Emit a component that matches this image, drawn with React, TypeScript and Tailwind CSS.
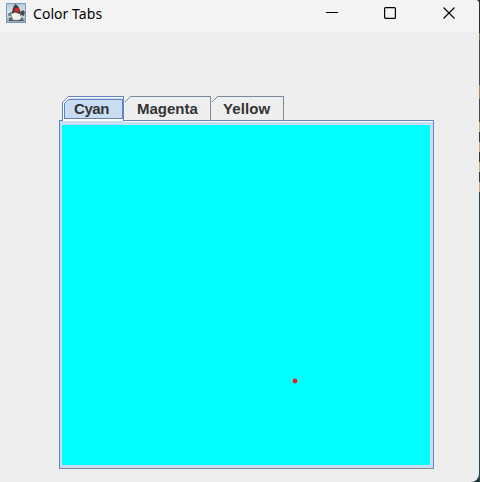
import { useState } from "react";

const tabs = [
  { name: "Cyan", width: "w-[62px]", pad: "pl-3 tracking-[-0.4px]" },
  { name: "Magenta", width: "w-[87px]", pad: "pl-[13px]" },
  { name: "Yellow", width: "w-[73px]", pad: "pl-3 tracking-[0.1px]" },
];

function JavaIcon() {
  return (
    <svg width="20" height="20" viewBox="0 0 20 20">
      <defs>
        <linearGradient id="sky" x1="0" y1="0" x2="0" y2="1">
          <stop offset="0" stopColor="#b4c6d6" />
          <stop offset="0.5" stopColor="#e2e8ec" />
          <stop offset="1" stopColor="#8fa3b5" />
        </linearGradient>
        <filter id="soft">
          <feGaussianBlur stdDeviation="0.55" />
        </filter>
      </defs>
      <rect x="0.5" y="0.5" width="19" height="19" fill="url(#sky)" stroke="#7e9bb6" />
      <g filter="url(#soft)">
        <path d="M1.5 11 L5 9 L7 10 L6 13 L3 13Z" fill="#6a7984" />
        <path d="M14 9 L17 7 L19 9 L18 13 L15 12Z" fill="#444c53" />
        <path d="M9 1 L12 3 L14 7 L15 13 L5 14 L6 9 L7 5Z" fill="#3a3c41" />
        <path d="M5 11 L9 9.5 L14 11 L15 15 L12 17 L6 16.5Z" fill="#eeeeec" />
        <path d="M3 15 L6 14 L7 17 L14 17 L16 14 L18 18 L3 18Z" fill="#59626a" />
      </g>
      <circle cx="10.8" cy="7.2" r="2.4" fill="#df2526" />
    </svg>
  );
}

function SelectedOutline() {
  return (
    <svg className="absolute inset-0" width="62" height="25" shapeRendering="crispEdges">
      <path d="M0 25V7L6 1H62V25Z" fill="#fff" />
      <path d="M2 23V8L8 2H61V23Z" fill="#c8ddf2" />
      <path d="M0.5 25V6.5L6.5 0.5H61.5V25" fill="none" stroke="#6382bf" />
      <path d="M2.5 22.5V7.5L6.5 3.5H60.5V22.5Z" fill="none" stroke="#6382bf" />
    </svg>
  );
}

function TabOutline({ width }: { width: number }) {
  return (
    <svg className="absolute inset-0" width={width} height="25" shapeRendering="crispEdges">
      <path d={`M0.5 6.5L6.5 0.5H${width - 0.5}V25`} fill="none" stroke="#7a8a99" />
    </svg>
  );
}

export default function App() {
  const [active, setActive] = useState(0);
  return (
    <div className="flex h-[482px] w-[480px] overflow-hidden bg-[#26343d] font-['Liberation_Sans',sans-serif]">
      <main className="flex w-[479px] flex-col overflow-hidden rounded-br-lg rounded-tr-[4px] bg-[#eeeeee]">
        <header className="flex h-8 shrink-0 bg-[#f3f3f3]">
          <div className="flex flex-1 pl-[6px] pt-[3px]">
            <JavaIcon />
            <h1 className="ml-[7px] mt-[1px] font-['Noto_Sans','Open_Sans',sans-serif] text-[14px] leading-5 tracking-[0.05px] text-black">
              Color Tabs
            </h1>
          </div>
          <div className="flex w-[153px] pt-[7px]">
            <button aria-label="Minimize" className="h-3">
              <svg className="block" width="12" height="12"><path d="M0 5.5H12" stroke="#000" /></svg>
            </button>
            <button aria-label="Maximize" className="ml-[46px] h-3">
              <svg className="block" width="12" height="12"><rect x="0.6" y="0.6" width="10.8" height="10.8" rx="1" fill="none" stroke="#000" strokeWidth="1.2" /></svg>
            </button>
            <button aria-label="Close" className="ml-[47px] h-3">
              <svg className="block" width="12" height="12"><path d="M0.5 0.5L11.5 11.5M11.5 0.5L0.5 11.5" stroke="#000" strokeWidth="1.1" /></svg>
            </button>
          </div>
        </header>
        <section className="ml-[59px] mt-16 w-[375px]">
          <div className="ml-[3px] flex h-6" role="tablist">
            {tabs.map((tab, i) => (
              <button
                key={tab.name}
                role="tab"
                aria-selected={active === i}
                onClick={() => setActive(i)}
                className={`relative h-[25px] shrink-0 text-left text-[15px] font-bold leading-[26px] text-[#333333] ${tab.width} ${tab.pad}`}
              >
                {i === 0 ? <SelectedOutline /> : <TabOutline width={i === 1 ? 87 : 73} />}
                <span className="relative">{tab.name}</span>
              </button>
            ))}
          </div>
          <div className="flex h-[349px] flex-col border border-b-[#7a8a99] border-l-[#6382bf] border-r-[#6382bf] border-t-[#6382bf] bg-[#c8ddf2]">
            <div className="ml-[64px] h-px shrink-0 bg-white" />
            <div className="ml-[2px] mt-[3px] flex h-[340px] w-[368px] bg-[#00ffff]">
              <svg width="368" height="340">
                <circle cx="233" cy="256" r="2.4" fill="#ed1c24" />
              </svg>
            </div>
          </div>
        </section>
      </main>
      <aside className="flex w-px flex-col">
        <div className="h-[33px] bg-[#292b2d]" />
        <div className="h-[7px] bg-[#7c664e]" />
        <div className="h-[45px] bg-[#47494b]" />
        <div className="h-[14px] bg-[#a88647]" />
        <div className="h-[23px] bg-[#44474a]" />
        <div className="h-[10px] bg-[#c9ad71]" />
        <div className="h-[10px] bg-[#30363a]" />
        <div className="h-[10px] bg-[#c9ad71]" />
        <div className="h-[10px] bg-[#30363a]" />
        <div className="h-[10px] bg-[#c9ad71]" />
        <div className="h-[10px] bg-[#30363a]" />
        <div className="h-[10px] bg-[#c9ad71]" />
        <div className="flex-1 bg-[#244554]" />
      </aside>
    </div>
  );
}
